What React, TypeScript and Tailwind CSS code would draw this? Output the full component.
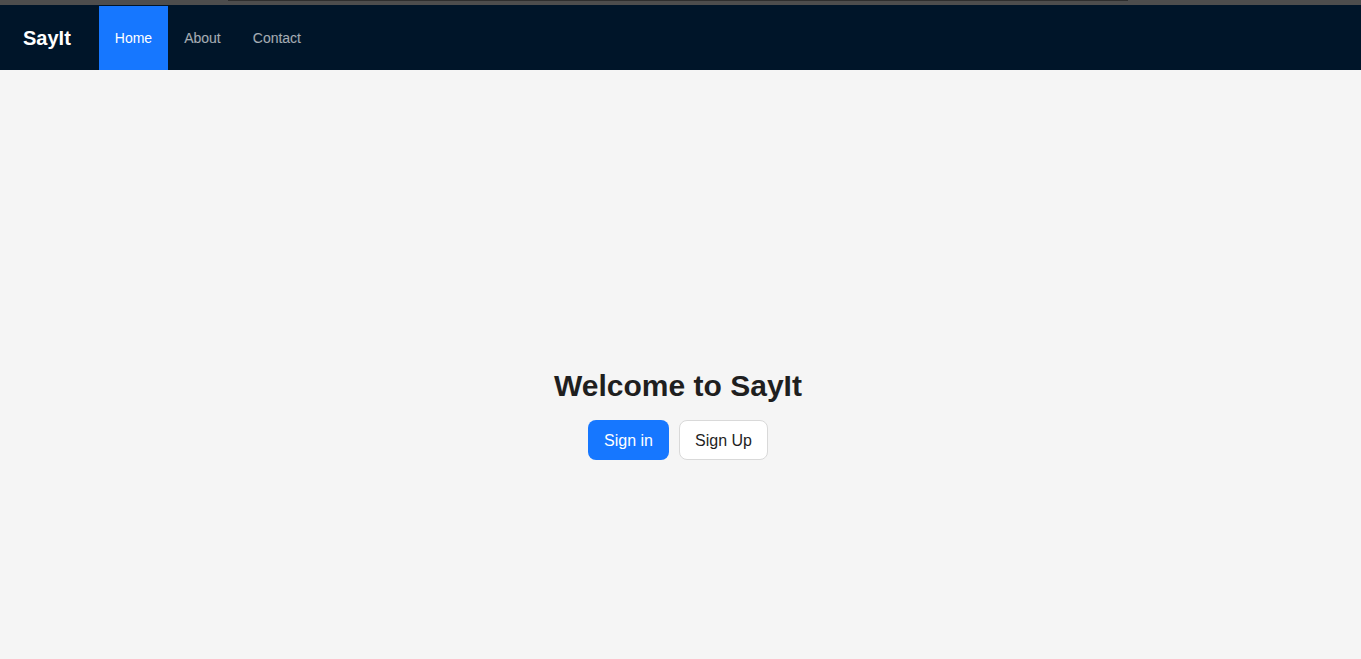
import React from 'react';

const links = ['Home', 'About', 'Contact'];

const App = () => {
  const [active, setActive] = React.useState('Home');

  return (
    <div className="min-h-screen flex flex-col bg-[#f5f5f5] font-['Liberation_Sans',Arial,sans-serif]">
      <div className="h-[5px] bg-[#4d4d4d] pl-[228px] pr-[233px]">
        <div className="h-px bg-[#2e2e2e]" />
      </div>
      <header className="h-[65px] bg-[#001529] flex items-end">
        <div className="h-[64px] flex items-center">
          <div className="pl-[23px] pr-[28px] text-white text-[20px] font-bold">SayIt</div>
          <nav className="flex h-full">
            {links.map((link) => (
              <button
                key={link}
                onClick={() => setActive(link)}
                className={`h-full px-4 text-[14px] ${
                  active === link ? 'bg-[#1677ff] text-white' : 'text-white/65'
                }`}
              >
                {link}
              </button>
            ))}
          </nav>
        </div>
      </header>
      <main className="flex-1 flex flex-col items-center pt-[296px] pr-[5px]">
        <h2 className="text-[30px] font-bold text-[#1f1f1f] leading-[40px]">Welcome to SayIt</h2>
        <div className="flex gap-[10px] mt-[14px]">
          <button className="h-10 w-[81px] pt-px rounded-lg bg-[#1677ff] text-white text-[16px]">Sign in</button>
          <button className="h-10 w-[89px] pt-px rounded-lg bg-white border border-[#d9d9d9] text-[#1f1f1f] text-[16px]">
            Sign Up
          </button>
        </div>
      </main>
    </div>
  );
};

export default App;
